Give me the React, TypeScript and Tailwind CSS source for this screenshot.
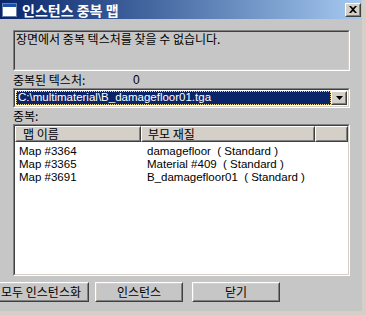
import React from "react";

const ko = { fontFamily: '"Noto Sans CJK KR", "Noto Sans", sans-serif' };
const lat = { fontFamily: '"Liberation Sans", Arial, "Noto Sans CJK KR", sans-serif' };

function Sunken({ className, children }: { className?: string; children?: React.ReactNode }) {
  return (
    <div className={"border-t-[#808080] border-l-[#808080] border-b-white border-r-white border " + (className || "")}>
      <div className="border border-t-[#404040] border-l-[#404040] border-b-[#d4d0c8] border-r-[#d4d0c8] w-full h-full">
        {children}
      </div>
    </div>
  );
}

function Raised({ className, children, style }: { className?: string; children?: React.ReactNode; style?: React.CSSProperties }) {
  return (
    <div
      style={style}
      className={"border border-t-white border-l-white border-b-[#404040] border-r-[#404040] " + (className || "")}
    >
      <div className="border border-t-[#d4d0c8] border-l-[#d4d0c8] border-b-[#808080] border-r-[#808080] w-full h-full flex items-center justify-center">
        {children}
      </div>
    </div>
  );
}

export default function App() {
  const rows = [
    ["Map #3364", "damagefloor  ( Standard )"],
    ["Map #3365", "Material #409  ( Standard )"],
    ["Map #3691", "B_damagefloor01  ( Standard )"],
  ];
  return (
    <div className="w-[366px] h-[315px] bg-[#d4d0c8] overflow-hidden">
      <div className="w-[362px] h-[311px] bg-[#c6c6c6] flex flex-col">
        {/* Title bar */}
        <div className="h-[19px] flex items-center bg-gradient-to-r from-[#0a246a] to-[#a6caf0] pl-[2px] pr-[1px]">
          <div className="w-[15px] h-[14px] bg-white border border-[#6b7fa8] flex flex-col">
            <div className="h-[3px] bg-[#1a4fb0]" />
          </div>
          <span className="ml-[5px] text-white font-bold text-[14px] leading-none" style={ko}>
            인스턴스 중복 맵
          </span>
          <div className="ml-auto">
            <Raised className="w-[16px] h-[14px] bg-[#d4d0c8]">
              <svg width="8" height="7" viewBox="0 0 8 7">
                <path d="M0 0h2l2 2 2-2h2L5 3.5 8 7H6L4 5 2 7H0l3-3.5z" fill="#000" />
              </svg>
            </Raised>
          </div>
        </div>

        <div className="pl-[13px] flex flex-col">
          <Sunken className="mt-[11px] w-[337px] h-[41px]">
            <div className="pl-[1px] pt-[0px] text-[12px] leading-[14px] text-black" style={ko}>
              장면에서 중복 텍스처를 찾을 수 없습니다.
            </div>
          </Sunken>

          <div className="h-[16px] mt-[1px] flex items-center text-[12px] text-black" style={ko}>
            <span className="w-[120px]">중복된 텍스처:</span>
            <span style={lat}>0</span>
          </div>

          <Sunken className="w-[337px] h-[20px] bg-white">
            <div className="flex h-full items-stretch p-[1px]">
              <div className="flex-1 bg-[#0a246a] border border-dotted border-[#f5db95] flex items-center pl-[1px]">
                <span className="text-white text-[11.5px] leading-none whitespace-nowrap" style={lat}>
                  C:\multimaterial\B_damagefloor01.tga
                </span>
              </div>
              <Raised className="w-[16px] bg-[#d4d0c8]">
                <svg width="7" height="4" viewBox="0 0 7 4">
                  <path d="M0 0h7L3.5 4z" fill="#000" />
                </svg>
              </Raised>
            </div>
          </Sunken>

          <div className="h-[16px] flex items-center text-[12px] text-black" style={ko}>
            중복:
          </div>

          <Sunken className="w-[337px] h-[152px] bg-white">
            <div className="flex flex-col h-full bg-white">
              <div className="flex h-[16px] text-[12px] text-black" style={ko}>
                <Raised className="w-[126px] bg-[#d4d0c8]">
                  <span className="w-full pl-[6px] leading-none">맵 이름</span>
                </Raised>
                <Raised className="w-[174px] bg-[#d4d0c8]">
                  <span className="w-full pl-[5px] leading-none">부모 재질</span>
                </Raised>
                <Raised className="flex-1 bg-[#d4d0c8]" />
              </div>
              <div className="pt-[3px] flex flex-col">
                {rows.map((r) => (
                  <div key={r[0]} className="flex h-[13px] items-center text-[11.5px] text-black whitespace-pre" style={lat}>
                    <span className="w-[132px] pl-[4px]">{r[0]}</span>
                    <span>{r[1]}</span>
                  </div>
                ))}
              </div>
            </div>
          </Sunken>
        </div>

        <div className="flex mt-[6px] h-[20px] text-[12px] text-black" style={ko}>
          <Raised className="w-[96px] ml-[-7px] bg-[#c6c6c6]">
            <span className="whitespace-nowrap">모두 인스턴스화</span>
          </Raised>
          <Raised className="w-[88px] ml-[6px] bg-[#c6c6c6]">
            <span>인스턴스</span>
          </Raised>
          <Raised className="w-[88px] ml-[9px] bg-[#c6c6c6]">
            <span>닫기</span>
          </Raised>
        </div>
      </div>
    </div>
  );
}
